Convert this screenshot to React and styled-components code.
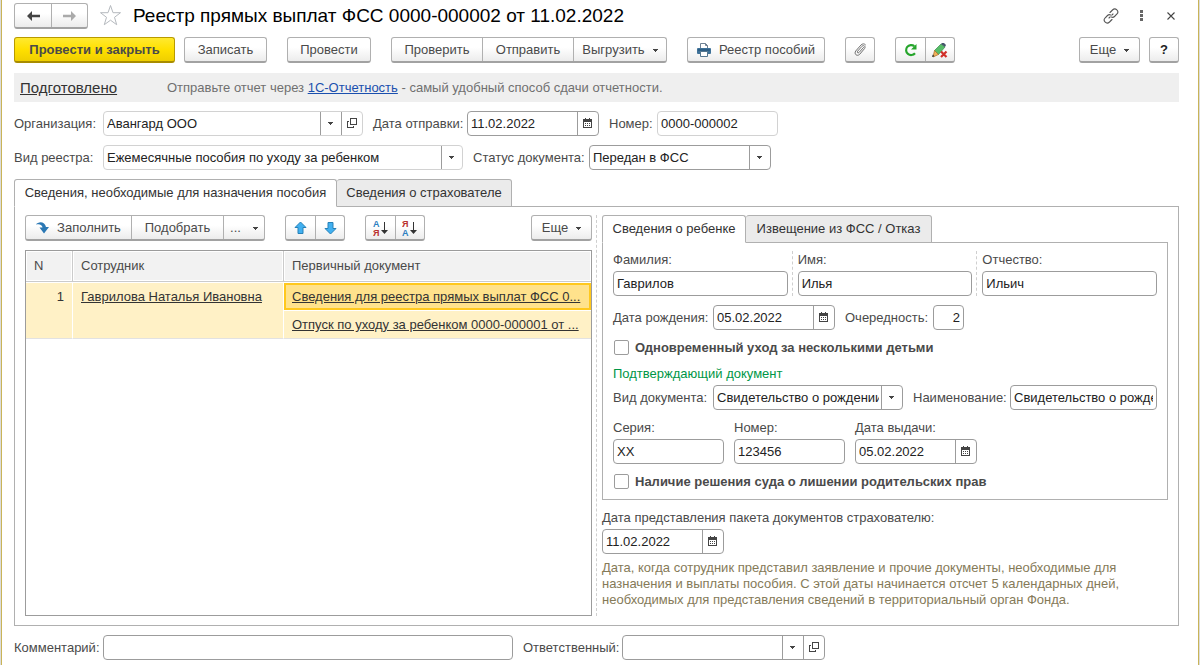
import React, { useState } from 'react';
import styled, { createGlobalStyle, css } from 'styled-components';

const GlobalStyle = createGlobalStyle`
  * {
    box-sizing: border-box;
  }

  body {
    margin: 0;
    background: #dcdcdc;
  }

  body, button, input, select, table {
    font-family: 'Liberation Sans', Arial, sans-serif;
    font-size: 13px;
    line-height: 16px;
    color: #4a4a4a;
  }
`;

// Window frame
const Window = styled.main`
  display: flex;
  flex-direction: column;
  gap: 9px;
  min-height: 100vh;
  margin: 0 1px;
  padding: 3px 19px 5px 12px;
  background: #fff;
  border-left: 1px solid #c9b458;
  border-right: 1px solid #c9b458;
`;

const TitleBar = styled.header`
  display: flex;
  align-items: center;
  height: 25px;
`;

const StarButton = styled.button`
  display: flex;
  margin-left: 11px;
  padding: 0;
  border: none;
  background: none;
`;

const Title = styled.h1`
  flex: 1;
  margin: 0 0 0 11px;
  font-size: 19px;
  line-height: 24px;
  font-weight: 400;
  color: #000;
`;

const IconButton = styled.button`
  display: flex;
  align-items: center;
  justify-content: center;
  width: ${props => props.$w}px;
  height: 24px;
  padding: 0;
  border: none;
  background: none;
`;

const Toolbar = styled.div`
  display: flex;
  align-items: center;
  gap: ${props => props.$gap || 20}px;
`;

const Spacer = styled.div`
  flex: 1;
`;

// Buttons that share one frame
const ButtonGroup = styled.div`
  display: flex;
  height: 26px;
  border: 1px solid #b0b0b0;
  border-bottom: 2px solid #a2a2a2;
  border-radius: 3px;
  background: linear-gradient(#fff 40%, #ececec);
`;

const GroupButton = styled.button`
  display: flex;
  align-items: center;
  justify-content: center;
  gap: ${props => props.$gap || 8}px;
  width: ${props => props.$w}px;
  padding: 1px 0 0;
  border: none;
  background: none;
  white-space: nowrap;

  & + & {
    border-left: 1px solid #b0b0b0;
  }
`;

const HelpButton = styled(GroupButton)`
  font-weight: 700;
  color: #222;
`;

const PrimaryButton = styled.button`
  width: 161px;
  height: 26px;
  padding: 1px 0 0;
  border: 1px solid #b89a00;
  border-bottom: 2px solid #a88c00;
  border-radius: 3px;
  background: linear-gradient(#ffe930, #ffe000 50%, #efcf00);
  font-weight: 700;
  white-space: nowrap;
`;

// Status strip under the command bar
const StatusBar = styled.section`
  display: flex;
  align-items: center;
  height: 29px;
  margin-top: 1px;
  padding: 0 6px;
  background: #efefef;
  color: #707070;
`;

const StatusLink = styled.a`
  width: 147px;
  font-size: 15px;
  color: #333;
`;

const Link = styled.a`
  color: #1a4fae;
`;

const Row = styled.div`
  display: flex;
  align-items: center;
  gap: 10px;
`;

const Field = styled.div`
  display: flex;
  align-items: ${props => (props.$stacked ? 'stretch' : 'center')};
  flex-direction: ${props => (props.$stacked ? 'column' : 'row')};
  gap: ${props => (props.$stacked ? 3 : 0)}px;
  ${props => props.$stacked && 'padding-top: 1px;'}
  ${props => props.$grow && 'flex: 1; min-width: 0;'}
`;

const Label = styled.label`
  flex: none;
  ${props => props.$w && `width: ${props.$w}px;`}
  white-space: nowrap;
`;

const Box = styled.div`
  display: flex;
  ${props => (props.$w ? `width: ${props.$w}px;` : 'flex: 1; min-width: 0;')}
  height: 25px;
  border: 1px solid ${props => (props.$light ? '#d2d2d2' : '#9c9c9c')};
  border-radius: 4px;
  background: #fff;
  overflow: hidden;
`;

const control = css`
  flex: 1;
  width: 100%;
  min-width: 0;
  height: 23px;
  margin: 0;
  padding: 0 3px;
  border: none;
  outline: none;
  background: none;
  color: #222;
`;

const Input = styled.input`
  ${control}
  text-align: ${props => (props.$right ? 'right' : 'left')};
`;

// The arrow sits in the same grid cell as the select, so the whole box opens it
const SelectCell = styled.div`
  display: grid;
  flex: 1;
  min-width: 0;
`;

const Select = styled.select`
  ${control}
  grid-area: 1 / 1;
  padding-right: 23px;
  appearance: none;
`;

const SelectArrow = styled.span`
  grid-area: 1 / 1;
  justify-self: end;
  display: flex;
  align-items: center;
  justify-content: center;
  width: 21px;
  padding: 0 1px 1px 0;
  border-left: 1px solid #9c9c9c;
  pointer-events: none;
`;

const BoxButton = styled.button`
  display: flex;
  align-items: center;
  justify-content: center;
  flex: none;
  width: 21px;
  padding: 0 1px 1px 0;
  border: none;
  border-left: 1px solid #9c9c9c;
  background: none;
`;

const Check = styled.label`
  display: flex;
  align-items: center;
  gap: 6px;
  height: 17px;
  line-height: 17px;
  font-weight: 700;
`;

const CheckInput = styled.input`
  appearance: none;
  width: 15px;
  height: 15px;
  margin: 0 0 0 1px;
  border: 1px solid #9c9c9c;
  border-radius: 2px;
  background: #fff;

  &:checked {
    background: #4a4a4a;
    box-shadow: inset 0 0 0 3px #fff;
  }
`;

// Tabs
const Tabs = styled.div`
  display: flex;
  flex-direction: column;
  flex: ${props => (props.$grow ? 1 : 'none')};
`;

const TabList = styled.div`
  display: flex;
  height: 28px;
  margin-bottom: -1px;
`;

const Tab = styled.button`
  position: relative;
  width: ${props => props.$w}px;
  padding: 0;
  border: 1px solid #b0b0b0;
  border-bottom-color: ${props => (props.$active ? '#fff' : '#b0b0b0')};
  border-radius: 3px 3px 0 0;
  background: ${props => (props.$active ? '#fff' : '#ebebeb')};
  color: #333;
  white-space: nowrap;

  & + & {
    border-left-width: 0;
  }
`;

const TabPanel = styled.div`
  display: flex;
  flex: 1;
  flex-direction: ${props => (props.$column ? 'column' : 'row')};
  padding: 8px 10px 9px;
  border: 1px solid #b0b0b0;
`;

const ListSide = styled.section`
  display: flex;
  flex-direction: column;
  flex: 0 0 567px;
  gap: 9px;
`;

const DetailSide = styled.section`
  display: flex;
  flex-direction: column;
  flex: 1;
  min-width: 0;
  margin-left: 4px;
  padding-left: 5px;
  border-left: 1px dashed #cfcfcf;
`;

const TableFrame = styled.div`
  flex: 1;
  border: 1px solid #9c9c9c;
`;

const Table = styled.table`
  width: 100%;
  table-layout: fixed;
  border-collapse: separate;
  border-spacing: 0;
`;

const HeadCell = styled.th`
  width: ${props => (props.$w ? `${props.$w}px` : 'auto')};
  height: 31px;
  padding: 0 8px;
  border-right: 1px solid #cbcbcb;
  border-bottom: 1px solid #cbcbcb;
  background: #f2f2f2;
  box-shadow: inset 0 0 0 1px #fff;
  font-weight: 400;
  text-align: left;

  &:last-child {
    border-right: none;
  }
`;

const Cell = styled.td`
  height: 28px;
  padding: 6px 8px 5px;
  border-top: 1px solid #fff;
  border-right: ${props => (props.$last ? 'none' : '1px solid #fff')};
  border-bottom: ${props => (props.$bottom ? '1px solid #e2e2e2' : 'none')};
  background: ${props => (props.$selected ? '#ffe28c' : '#fff1c6')};
  box-shadow: ${props => (props.$selected ? 'inset 0 0 0 2px #ffc81e' : 'none')};
  color: #333;
  text-align: ${props => (props.$right ? 'right' : 'left')};
  vertical-align: top;
`;

const CellLink = styled.a`
  color: #333;
  white-space: nowrap;
`;

// Three name columns with dashed rules between them
const NameGrid = styled.div`
  display: grid;
  grid-template-columns: repeat(3, 1fr);
  gap: 10px;
`;

const NameField = styled(Field)`
  & + & {
    margin-left: -6px;
    padding-left: 5px;
    border-left: 1px dashed #cfcfcf;
  }
`;

const DocumentTitle = styled.h2`
  margin: 10px 0 3px;
  font-size: 13px;
  line-height: 16px;
  font-weight: 400;
  color: #009646;
`;

const Stack = styled.div`
  display: flex;
  flex-direction: column;
  gap: 9px;
`;

const Submission = styled(Stack)`
  gap: 3px;
  margin-top: 10px;
`;

const Hint = styled.p`
  max-width: 540px;
  margin: 3px 0 0;
  color: #857a58;
`;

// Icons
const Caret = () => (
  <svg width="5" height="3" viewBox="0 0 5 3" shapeRendering="crispEdges">
    <path d="M0 0h5v1H0zM1 1h3v1H1zM2 2h1v1H2z" fill="#444" />
  </svg>
);

const OpenIcon = () => (
  <svg width="10" height="10" viewBox="0 0 10 10" shapeRendering="crispEdges">
    <path d="M3.5 .5h6v6h-6zM1.5 3.5h-1v6h6v-1.5M.5 3.5h1.5" fill="none" stroke="#444" />
  </svg>
);

const CalendarIcon = () => (
  <svg width="9" height="10" viewBox="0 0 9 10" shapeRendering="crispEdges">
    <path d="M0 1h9v9H0zM1 4v5h7V4z" fill="#444" fillRule="evenodd" />
    <path d="M2 0h1v2H2zM6 0h1v2H6zM2 5h1v1H2zM4 5h1v1H4zM6 5h1v1H6zM2 7h1v1H2zM4 7h1v1H4zM6 7h1v1H6z" fill="#444" />
  </svg>
);

const ArrowIcon = ({ color, flip }) => (
  <svg width="15" height="12" viewBox="0 0 15 12">
    <path
      d={flip ? 'M14 6 9 1v3.800H1v2.400h8V11z' : 'M1 6l5-5v3.800h8v2.400H6V11z'}
      fill={color}
    />
  </svg>
);

const StarIcon = () => (
  <svg width="23" height="23" viewBox="0 0 23 23">
    <path
      d="M11.500 1.500l2.500 7.200h7.500l-6 4.600 2.200 7.400-6.200-4.500-6.200 4.500 2.200-7.400-6-4.600H9z"
      fill="#fff"
      stroke="#b5b9be"
    />
  </svg>
);

const LinkIcon = () => (
  <svg width="16" height="16" viewBox="0 0 16 16" fill="none" stroke="#555" strokeWidth="1.100" strokeLinecap="round">
    <path d="M7 4.500L9.500 2c3-2.800 7 1 4.500 4l-2.500 2.500c-1 1-2 1.100-3 .6" />
    <path d="M9 11.500L6.500 14c-3 2.800-7-1-4.500-4l2.500-2.500c1-1 2-1.100 3-.6" />
    <path d="M6 10l1.200-1.200M8.800 7.200L10 6" />
  </svg>
);

const DotsIcon = () => (
  <svg width="3" height="11" viewBox="0 0 3 11">
    <path d="M0 0h3v3H0zM0 4h3v3H0zM0 8h3v3H0z" fill="#666" />
  </svg>
);

const CloseIcon = () => (
  <svg width="8" height="8" viewBox="0 0 8 8">
    <path d="M.5.500l7 7M7.500.500l-7 7" stroke="#444" strokeWidth="1.100" />
  </svg>
);

const PrinterIcon = () => (
  <svg width="14" height="14" viewBox="0 0 14 14">
    <path d="M3.500 5.500v-5h5l2 2v3" fill="#fff" stroke="#6f8193" />
    <path d="M8.500.500v2h2" fill="none" stroke="#6f8193" />
    <rect y="5" width="14" height="6" rx="1" fill="#3f7299" />
    <path d="M1 7h12" stroke="#1f4b70" />
    <path d="M3.500 8.500h7v5h-7z" fill="#fff" stroke="#55768f" />
  </svg>
);

const ClipIcon = () => (
  <svg width="14" height="14" viewBox="0 0 14 14">
    <path
      d="M10.500 4.500L6 9.500c-1 1-2.300-.2-1.400-1.300L9 3.300c1.800-1.800 4 .3 2.600 2.200L6.700 11.300c-2.600 2.600-6-.3-4-3.300L8 2c1.500-1.500 3.500-1.500 4.500-.2"
      fill="none"
      stroke="#707070"
      strokeLinecap="round"
    />
  </svg>
);

const RefreshIcon = () => (
  <svg width="14" height="14" viewBox="0 0 14 14">
    <path d="M11 10.200A5 5 0 1 1 10.300 3.200" fill="none" stroke="#26a52c" strokeWidth="2.200" />
    <path d="M12.500 1v5.500H7z" fill="#26a52c" />
  </svg>
);

const PencilIcon = () => (
  <svg width="16" height="15" viewBox="0 0 16 15">
    <path d="M2.500 7.500L9 1l4 3-6.500 7.500z" fill="#57bd68" stroke="#3a8d4c" strokeWidth=".7" />
    <path d="M9 1l1-1h2l2 2-1 2z" fill="#45566b" />
    <path d="M2.500 7.500l4 4L1 14z" fill="#f1b15c" stroke="#a46b22" strokeWidth=".7" />
    <path d="M0 14l.8-2.500 1.700 1.800z" fill="#333" />
    <path d="M9 8.500l5.500 5.500M14.500 8.500L9 14" stroke="#d1302a" strokeWidth="2.200" />
  </svg>
);

const FillIcon = () => (
  <svg width="13" height="12" viewBox="0 0 13 12">
    <path d="M0 2.500C2-.8 9-1.200 10 5h3l-5 6.500L3.500 5.500h3C6.300 2.800 3.500 1.500 0 2.500z" fill="#2b78b4" />
  </svg>
);

const MoveIcon = ({ down }) => (
  <svg width="13" height="14" viewBox="0 0 13 14">
    <path
      d={down ? 'M6.500 13L12 7.500H9V1.500H4v6H1z' : 'M6.500 1L12 6.500H9v6H4v-6H1z'}
      fill="#41b0f0"
      stroke="#2681b8"
    />
  </svg>
);

const SortIcon = ({ desc }) => (
  <svg width="16" height="18" viewBox="0 0 16 18">
    <text x="0" y="8" fontSize="9" fontWeight="700" fill={desc ? '#b9302e' : '#2d7fc0'}>
      {desc ? 'Я' : 'А'}
    </text>
    <text x="0" y="17" fontSize="9" fontWeight="700" fill={desc ? '#2d7fc0' : '#b9302e'}>
      {desc ? 'А' : 'Я'}
    </text>
    <path d="M11.500 3v11" stroke="#333" />
    <path d="M8 11h7l-3.500 4z" fill="#333" />
  </svg>
);

const TextField = ({ id, label, labelWidth, width, light, value, right, grow }) => (
  <Field $grow={grow}>
    <Label htmlFor={id} $w={labelWidth}>{label}</Label>
    <Box $w={width} $light={light}>
      <Input id={id} defaultValue={value} $right={right} />
    </Box>
  </Field>
);

const StackedField = ({ id, label, width, value, as: Wrapper = Field }) => (
  <Wrapper $stacked>
    <Label htmlFor={id}>{label}</Label>
    <Field>
      <Box $w={width}>
        <Input id={id} defaultValue={value} />
      </Box>
    </Field>
  </Wrapper>
);

const DateBox = ({ id, width = 122, value }) => (
  <Box $w={width}>
    <Input id={id} defaultValue={value} />
    <BoxButton aria-label="Выбрать дату"><CalendarIcon /></BoxButton>
  </Box>
);

const SelectField = ({ id, label, labelWidth, width, light, value, openable }) => (
  <Field>
    <Label htmlFor={id} $w={labelWidth}>{label}</Label>
    <Box $w={width} $light={light}>
      <SelectCell>
        <Select id={id} defaultValue={value}>
          <option value={value}>{value}</option>
        </Select>
        <SelectArrow><Caret /></SelectArrow>
      </SelectCell>
      {openable && <BoxButton aria-label="Открыть"><OpenIcon /></BoxButton>}
    </Box>
  </Field>
);

const App = () => {
  const [tab, setTab] = useState(0);
  const [childTab, setChildTab] = useState(0);

  return (
    <>
      <GlobalStyle />
      <Window>
        <TitleBar>
          <ButtonGroup>
            <GroupButton $w={36} aria-label="Назад"><ArrowIcon color="#444" /></GroupButton>
            <GroupButton $w={36} aria-label="Вперед"><ArrowIcon color="#aaa" flip /></GroupButton>
          </ButtonGroup>
          <StarButton aria-label="В избранное"><StarIcon /></StarButton>
          <Title>Реестр прямых выплат ФСС 0000-000002 от 11.02.2022</Title>
          <IconButton $w={16} aria-label="Ссылка"><LinkIcon /></IconButton>
          <IconButton $w={44} aria-label="Меню"><DotsIcon /></IconButton>
          <IconButton $w={16} aria-label="Закрыть"><CloseIcon /></IconButton>
        </TitleBar>

        <Toolbar>
          <Toolbar $gap={9}>
            <PrimaryButton>Провести и закрыть</PrimaryButton>
            <ButtonGroup><GroupButton $w={81}>Записать</GroupButton></ButtonGroup>
          </Toolbar>
          <ButtonGroup><GroupButton $w={82}>Провести</GroupButton></ButtonGroup>
          <ButtonGroup>
            <GroupButton $w={90}>Проверить</GroupButton>
            <GroupButton $w={91}>Отправить</GroupButton>
            <GroupButton $w={93}>Выгрузить <Caret /></GroupButton>
          </ButtonGroup>
          <ButtonGroup><GroupButton $w={136}><PrinterIcon /> Реестр пособий</GroupButton></ButtonGroup>
          <ButtonGroup><GroupButton $w={28} aria-label="Файлы"><ClipIcon /></GroupButton></ButtonGroup>
          <ButtonGroup>
            <GroupButton $w={29} aria-label="Обновить"><RefreshIcon /></GroupButton>
            <GroupButton $w={29} aria-label="Отменить правку"><PencilIcon /></GroupButton>
          </ButtonGroup>
          <Spacer />
          <Toolbar $gap={9}>
            <ButtonGroup><GroupButton $w={59}>Еще <Caret /></GroupButton></ButtonGroup>
            <ButtonGroup><HelpButton $w={28}>?</HelpButton></ButtonGroup>
          </Toolbar>
        </Toolbar>

        <StatusBar>
          <StatusLink href="#status">Подготовлено</StatusLink>
          <span>
            Отправьте отчет через <Link href="#report">1С-Отчетность</Link> - самый удобный способ сдачи отчетности.
          </span>
        </StatusBar>

        <Row>
          <SelectField id="org" label="Организация:" labelWidth={89} width={260} light value="Авангард ООО" openable />
          <Field>
            <Label htmlFor="sent" $w={94}>Дата отправки:</Label>
            <DateBox id="sent" width={132} value="11.02.2022" />
          </Field>
          <TextField id="number" label="Номер:" labelWidth={48} width={121} light value="0000-000002" />
        </Row>
        <Row>
          <SelectField id="kind" label="Вид реестра:" labelWidth={89} width={360} light value="Ежемесячные пособия по уходу за ребенком" />
          <SelectField id="state" label="Статус документа:" labelWidth={116} width={182} value="Передан в ФСС" />
        </Row>

        <Tabs $grow>
          <TabList role="tablist">
            <Tab role="tab" $w={323} $active={tab === 0} onClick={() => setTab(0)}>
              Сведения, необходимые для назначения пособия
            </Tab>
            <Tab role="tab" $w={175} $active={tab === 1} onClick={() => setTab(1)}>
              Сведения о страхователе
            </Tab>
          </TabList>
          <TabPanel>
            <ListSide>
              <Toolbar>
                <ButtonGroup>
                  <GroupButton $w={105}><FillIcon /> Заполнить</GroupButton>
                  <GroupButton $w={92}>Подобрать</GroupButton>
                  <GroupButton $w={41} $gap={12}>... <Caret /></GroupButton>
                </ButtonGroup>
                <ButtonGroup>
                  <GroupButton $w={29} aria-label="Вверх"><MoveIcon /></GroupButton>
                  <GroupButton $w={29} aria-label="Вниз"><MoveIcon down /></GroupButton>
                </ButtonGroup>
                <ButtonGroup>
                  <GroupButton $w={29} aria-label="По возрастанию"><SortIcon /></GroupButton>
                  <GroupButton $w={29} aria-label="По убыванию"><SortIcon desc /></GroupButton>
                </ButtonGroup>
                <Spacer />
                <ButtonGroup><GroupButton $w={59}>Еще <Caret /></GroupButton></ButtonGroup>
              </Toolbar>
              <TableFrame>
                <Table>
                  <thead>
                    <tr>
                      <HeadCell $w={47}>N</HeadCell>
                      <HeadCell $w={211}>Сотрудник</HeadCell>
                      <HeadCell>Первичный документ</HeadCell>
                    </tr>
                  </thead>
                  <tbody>
                    <tr>
                      <Cell rowSpan={2} $right $bottom>1</Cell>
                      <Cell rowSpan={2} $bottom><CellLink href="#employee">Гаврилова Наталья Ивановна</CellLink></Cell>
                      <Cell $selected $last>
                        <CellLink href="#info">Сведения для реестра прямых выплат ФСС 0...</CellLink>
                      </Cell>
                    </tr>
                    <tr>
                      <Cell $last $bottom>
                        <CellLink href="#leave">Отпуск по уходу за ребенком 0000-000001 от ...</CellLink>
                      </Cell>
                    </tr>
                  </tbody>
                </Table>
              </TableFrame>
            </ListSide>

            <DetailSide>
              <Tabs>
                <TabList role="tablist">
                  <Tab role="tab" $w={144} $active={childTab === 0} onClick={() => setChildTab(0)}>
                    Сведения о ребенке
                  </Tab>
                  <Tab role="tab" $w={186} $active={childTab === 1} onClick={() => setChildTab(1)}>
                    Извещение из ФСС / Отказ
                  </Tab>
                </TabList>
                <TabPanel $column>
                  <Stack>
                    <NameGrid>
                      <StackedField as={NameField} id="surname" label="Фамилия:" value="Гаврилов" />
                      <StackedField as={NameField} id="name" label="Имя:" value="Илья" />
                      <StackedField as={NameField} id="patronymic" label="Отчество:" value="Ильич" />
                    </NameGrid>
                    <Row>
                      <Field>
                        <Label htmlFor="birth" $w={100}>Дата рождения:</Label>
                        <DateBox id="birth" value="05.02.2022" />
                      </Field>
                      <TextField id="order" label="Очередность:" labelWidth={88} width={31} value="2" right />
                    </Row>
                    <Check><CheckInput type="checkbox" /> Одновременный уход за несколькими детьми</Check>
                  </Stack>
                  <DocumentTitle>Подтверждающий документ</DocumentTitle>
                  <Stack>
                    <Row>
                      <SelectField id="doc" label="Вид документа:" labelWidth={100} width={190} value="Свидетельство о рождении" />
                      <TextField id="docname" label="Наименование:" labelWidth={97} value="Свидетельство о рождении" grow />
                    </Row>
                    <Row>
                      <StackedField id="series" label="Серия:" width={111} value="XX" />
                      <StackedField id="docnum" label="Номер:" width={111} value="123456" />
                      <Field $stacked>
                        <Label htmlFor="issued">Дата выдачи:</Label>
                        <DateBox id="issued" value="05.02.2022" />
                      </Field>
                    </Row>
                    <Check><CheckInput type="checkbox" /> Наличие решения суда о лишении родительских прав</Check>
                  </Stack>
                </TabPanel>
              </Tabs>
              <Submission>
                <Label htmlFor="submitted">Дата представления пакета документов страхователю:</Label>
                <DateBox id="submitted" value="11.02.2022" />
                <Hint>
                  Дата, когда сотрудник представил заявление и прочие документы, необходимые для
                  назначения и выплаты пособия. С этой даты начинается отсчет 5 календарных дней,
                  необходимых для представления сведений в территориальный орган Фонда.
                </Hint>
              </Submission>
            </DetailSide>
          </TabPanel>
        </Tabs>

        <Row>
          <TextField id="comment" label="Комментарий:" labelWidth={89} width={410} value="" />
          <SelectField id="responsible" label="Ответственный:" labelWidth={99} width={203} value="" openable />
        </Row>
      </Window>
    </>
  );
};

export default App;
